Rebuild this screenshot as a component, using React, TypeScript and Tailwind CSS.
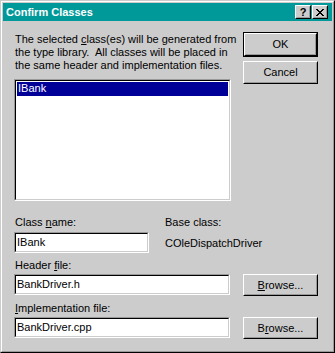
import React from 'react';

const font = { fontFamily: '"Liberation Sans", Arial, sans-serif' };

function Raised({ children, className = '' }: { children: React.ReactNode; className?: string }) {
  return (
    <div className={`border border-t-white border-l-white border-r-black border-b-black ${className}`}>
      <div className="flex h-full w-full items-center justify-center border border-transparent border-r-[#999999] border-b-[#999999]">
        {children}
      </div>
    </div>
  );
}

function Sunken({ children, className = '' }: { children?: React.ReactNode; className?: string }) {
  return (
    <div className={`border border-t-[#999999] border-l-[#999999] border-r-white border-b-white ${className}`}>
      <div className="h-full w-full border border-t-black border-l-black border-r-[#cccccc] border-b-[#cccccc] bg-white">
        {children}
      </div>
    </div>
  );
}

function Button({ children, isDefault = false, className = '' }: { children: React.ReactNode; isDefault?: boolean; className?: string }) {
  if (isDefault) {
    return (
      <div className={`border border-black ${className}`}>
        <Raised className="h-full w-full">{children}</Raised>
      </div>
    );
  }
  return <Raised className={className}>{children}</Raised>;
}

function Edit({ value, className = '' }: { value: string; className?: string }) {
  return (
    <Sunken className={className}>
      <div className="flex h-full items-center pl-[1px] text-black">{value}</div>
    </Sunken>
  );
}

export default function App() {
  return (
    <div style={font} className="h-[353px] w-[335px] select-none text-[11px] leading-[13px] text-black">
      <div className="h-full w-full border border-t-[#cccccc] border-l-[#cccccc] border-r-black border-b-black">
        <div className="flex h-full w-full flex-col border border-t-white border-l-white border-r-[#999999] border-b-[#999999] bg-[#cccccc] p-[1px]">
          {/* title bar */}
          <div className="flex h-[18px] items-center bg-[#009999] pl-[3px] pr-[4px]">
            <span className="flex-1 font-bold text-white">Confirm Classes</span>
            <div className="flex gap-[1px]">
              <Raised className="h-[14px] w-[16px] bg-[#cccccc]">
                <span className="text-[11px] font-bold leading-none">?</span>
              </Raised>
              <Raised className="h-[14px] w-[16px] bg-[#cccccc]">
                <svg width="8" height="7" viewBox="0 0 8 7">
                  <path d="M0 0h2v1h1v1h2V1h1V0h2v1H7v1H6v1H5v1h1v1h1v1h1v1H6V6H5V5H3v1H2v1H0V6h1V5h1V4h1V3H2V2H1V1H0z" fill="black" />
                </svg>
              </Raised>
            </div>
          </div>

          {/* top area */}
          <div className="flex pl-[11px] pt-[11px]">
            <div className="w-[217px]">
              <p className="mt-[1px] whitespace-nowrap pl-[1px]">
                The selected <span className="underline">c</span>lass(es) will be generated from
                <br />
                the type library.&nbsp; All classes will be placed in
                <br />
                the same header and implementation files.
              </p>
              <Sunken className="mt-[7px] h-[122px] w-[217px]">
                <div className="p-[1px]">
                  <div className="h-[14px] bg-[#000099] pl-[1px] text-white">IBank</div>
                </div>
              </Sunken>
            </div>
            <div className="ml-[12px] flex flex-col gap-[4px]">
              <Button isDefault className="h-[25px] w-[75px]">OK</Button>
              <Button className="h-[23px] w-[75px]">Cancel</Button>
            </div>
          </div>

          {/* fields */}
          <div className="mt-[15px] pl-[11px]">
            <div className="flex">
              <div className="w-[135px]">
                <div className="pl-[1px]">
                  Class <span className="underline">n</span>ame:
                </div>
                <Edit value="IBank" className="mt-[3px] h-[21px] w-[135px]" />
              </div>
              <div className="ml-[16px]">
                <div>Base class:</div>
                <div className="mt-[8px]">COleDispatchDriver</div>
              </div>
            </div>

            <div className="mt-[6px] pl-[1px]">
              Header <span className="underline">f</span>ile:
            </div>
            <div className="mt-[2px] flex items-start">
              <Edit value="BankDriver.h" className="h-[21px] w-[216px]" />
              <Button className="ml-[13px] h-[22px] w-[75px]">
                <span>
                  <span className="underline">B</span>rowse...
                </span>
              </Button>
            </div>

            <div className="mt-[6px] pl-[1px]">
              <span className="underline">I</span>mplementation file:
            </div>
            <div className="mt-[2px] flex items-start">
              <Edit value="BankDriver.cpp" className="h-[21px] w-[216px]" />
              <Button className="ml-[13px] h-[22px] w-[75px]">
                <span>
                  B<span className="underline">r</span>owse...
                </span>
              </Button>
            </div>
          </div>
        </div>
      </div>
    </div>
  );
}
